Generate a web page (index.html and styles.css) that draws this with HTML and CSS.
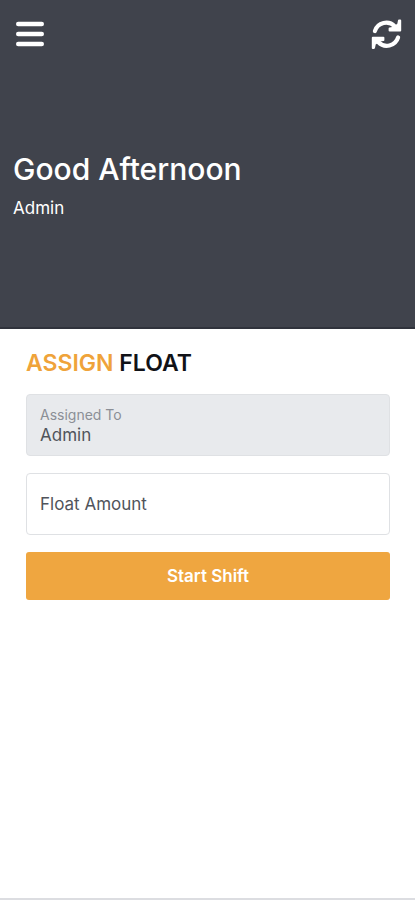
FILE: index.html
```html
<!DOCTYPE html>
<html lang="en">
<head>
<meta charset="utf-8">
<meta name="viewport" content="width=device-width, initial-scale=1">
<title>Assign Float</title>
<link rel="stylesheet" href="styles.css">
</head>
<body>
<header class="hero">
  <nav class="toolbar">
    <button class="icon-button" type="button" aria-label="Menu">
      <svg width="28" height="32" viewBox="0 0 28 32" fill="none" stroke="currentColor" stroke-width="4.4" stroke-linecap="round"><path d="M2.2 6h23.6M2.2 16h23.6M2.2 26h23.6"/></svg>
    </button>
    <button class="icon-button" type="button" aria-label="Refresh">
      <svg width="32" height="32" viewBox="0 0 32 32"><path fill="none" stroke="currentColor" stroke-width="4.2" stroke-linecap="round" d="M4.9 13A11.8 11.8 0 0 1 24.8 8.4L27 10.6M28.1 19.4A11.8 11.8 0 0 1 8.2 24L6 21.8"/><path fill="currentColor" stroke="currentColor" stroke-width="2" stroke-linejoin="round" d="M29 2.5h1.2V12.6H19.6V10.4L23.6 9.8 28.2 6.4ZM4 29.9H2.8V19.8H13.4V22L9.4 22.6 4.8 26Z"/></svg>
    </button>
  </nav>
  <div class="greeting">
    <h1>Good Afternoon</h1>
    <p>Admin</p>
  </div>
</header>
<main class="content">
  <h2><span class="accent">ASSIGN</span> FLOAT</h2>
  <form class="float-form">
    <div class="field field-filled">
      <label for="assigned">Assigned To</label>
      <input id="assigned" type="text" value="Admin" readonly>
    </div>
    <div class="field field-empty">
      <label for="amount">Float Amount</label>
      <input id="amount" type="text" inputmode="decimal">
    </div>
    <button class="submit" type="button">Start Shift</button>
  </form>
</main>
</body>
</html>
```
FILE: styles.css
```css
* {
  box-sizing: border-box;
}

body {
  display: flex;
  flex-direction: column;
  min-height: 100vh;
  margin: 0;
  border-bottom: 2px solid #dcdde1;
  background: #fff;
  color: #111217;
  font-family: Inter, "Liberation Sans", sans-serif;
  font-size: 17px;
  line-height: 20px;
}

h1, h2, p {
  margin: 0;
}

button, input {
  font: inherit;
}

.hero {
  padding: 18px 13px 109px;
  border-bottom: 2px solid #30333c;
  background: #40434c;
  color: #fff;
}

.toolbar {
  display: flex;
  justify-content: space-between;
  padding-left: 3px;
}

.icon-button {
  padding: 0;
  border: 0;
  background: none;
  color: #fff;
}

.icon-button svg {
  display: block;
}

.greeting {
  display: grid;
  gap: 11px;
  margin-top: 101px;
}

.greeting h1 {
  font-size: 30px;
  font-weight: 500;
  line-height: 36px;
}

.content {
  padding: 22px 25px 22px 26px;
}

h2 {
  font-size: 23px;
  font-weight: 600;
  line-height: 24px;
}

.accent {
  color: #efa33a;
}

.float-form {
  display: grid;
  gap: 17px;
  margin-top: 19px;
}

.field {
  display: grid;
  min-height: 62px;
  border: 1px solid #dfe1e4;
  border-radius: 4px;
}

.field input {
  width: 100%;
  min-width: 0;
  padding: 0 13px;
  border: 0;
  outline: 0;
  background: none;
  color: #50545b;
}

.field label {
  padding: 0 13px;
}

.field-filled {
  align-content: center;
  background: #e8eaed;
}

.field-filled label {
  color: #8b8f96;
  font-size: 14px;
}

.field-filled input {
  height: 20px;
}

.field-empty label,
.field-empty input {
  grid-area: 1 / 1;
}

.field-empty label {
  align-self: center;
  color: #50545b;
}

.submit {
  min-height: 48px;
  border: 0;
  border-radius: 3px;
  background: #efa640;
  color: #fff;
  font-weight: 600;
}
```
